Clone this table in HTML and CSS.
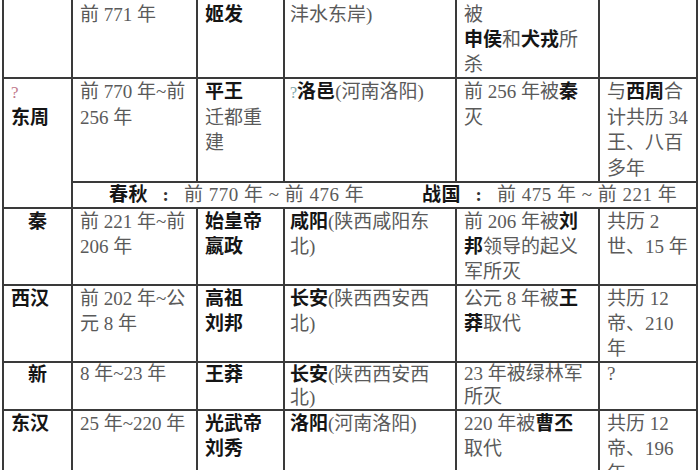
FILE: index.html
```html
<!DOCTYPE html>
<html lang="zh">
<head>
<meta charset="utf-8">
<link rel="stylesheet" href="styles.css">
</head>
<body>
<table class="dyn">
<colgroup>
<col class="c1"><col class="c2"><col class="c3"><col class="c4"><col class="c5"><col class="c6">
</colgroup>
<tr>
<td><b>西周</b></td>
<td>前 1046 年~<br>前 771 年</td>
<td>周武王<br><b>姬发</b></td>
<td><b>镐京</b>(陕西西安<br>沣水东岸)</td>
<td>前 771 年幽王<br>被<br><b>申侯</b>和<b>犬戎</b>所<br>杀</td>
<td>约 275 年</td>
</tr>
<tr class="loose">
<td rowspan="2"><span class="q1">?</span><br><b>东周</b></td>
<td>前 770 年~前<br>256 年</td>
<td><b>平王</b><br>迁都重<br>建</td>
<td><span class="q2">?</span><b>洛邑</b>(河南洛阳)</td>
<td>前 256 年被<b>秦</b><br>灭</td>
<td>与<b>西周</b>合<br>计共历 34<br>王、八百<br>多年</td>
</tr>
<tr class="period">
<td colspan="5"><div class="pline"><span class="p1"><b>春秋</b><span class="colon">:</span>前 770 年 ~ 前 476 年</span><span class="p2"><b>战国</b><span class="colon">:</span>前 475 年 ~ 前 221 年</span></div></td>
</tr>
<tr>
<td class="mid"><b>秦</b></td>
<td>前 221 年~前<br>206 年</td>
<td><b>始皇帝<br>嬴政</b></td>
<td><b>咸阳</b>(陕西咸阳东<br>北)</td>
<td>前 206 年被<b>刘</b><br><b>邦</b>领导的起义<br>军所灭</td>
<td>共历 2<br>世、15 年</td>
</tr>
<tr>
<td><b>西汉</b></td>
<td>前 202 年~公<br>元 8 年</td>
<td><b>高祖<br>刘邦</b></td>
<td><b>长安</b>(陕西西安西<br>北)</td>
<td>公元 8 年被<b>王</b><br><b>莽</b>取代</td>
<td>共历 12<br>帝、210<br>年</td>
</tr>
<tr class="tight">
<td class="mid"><b>新</b></td>
<td>8 年~23 年</td>
<td><b>王莽</b></td>
<td><b>长安</b>(陕西西安西<br>北)</td>
<td>23 年被绿林军<br>所灭</td>
<td>?</td>
</tr>
<tr>
<td><b>东汉</b></td>
<td>25 年~220 年</td>
<td><b>光武帝<br>刘秀</b></td>
<td><b>洛阳</b>(河南洛阳)</td>
<td>220 年被<b>曹丕</b><br>取代</td>
<td>共历 12<br>帝、196<br>年</td>
</tr>
</table>
</body>
</html>
```

FILE: styles.css
```css
html, body {
  margin: 0;
  padding: 0;
  background: #ffffff;
}
body {
  overflow: hidden;
  height: 470px;
}
.dyn {
  border-collapse: collapse;
  table-layout: fixed;
  width: 696px;
  margin: -25px 0 0 2px;
  font-family: "Liberation Serif", "Noto Sans CJK SC", serif;
  font-size: 19px;
  line-height: 25px;
  color: #5a5a5a;
}
.c1 { width: 69px; }
.c2 { width: 125px; }
.c3 { width: 87px; }
.c4 { width: 172px; }
.c5 { width: 143px; }
.c6 { width: 98px; }
.dyn td {
  border: 2px solid #3a3a3a;
  vertical-align: top;
  padding: 0 2px 0 7px;
  white-space: nowrap;
  overflow: hidden;
}
.dyn td:nth-child(4) { padding-left: 5px; }
.dyn b {
  font-family: "Noto Sans CJK SC", sans-serif;
  font-weight: 700;
  line-height: 1;
  color: #151515;
}
.dyn td.mid { text-align: center; padding-left: 2px; }
.q1 { color: #c27a8c; font-size: 17px; line-height: 1; }
.q2 { color: #7fa5a8; font-size: 16px; line-height: 1; }
.loose td { line-height: 25.5px; }
.tight td { line-height: 22.5px; }
.period td {
  padding: 0 0 0 36px;
  line-height: 24px;
}
.pline {
  display: flex;
  white-space: nowrap;
  letter-spacing: 0.5px;
}
.p1 { width: 313px; flex: none; }
.p2 { flex: none; }
.colon {
  display: inline-block;
  width: 36px;
  text-align: center;
  font-weight: 700;
  color: #333;
}
```
